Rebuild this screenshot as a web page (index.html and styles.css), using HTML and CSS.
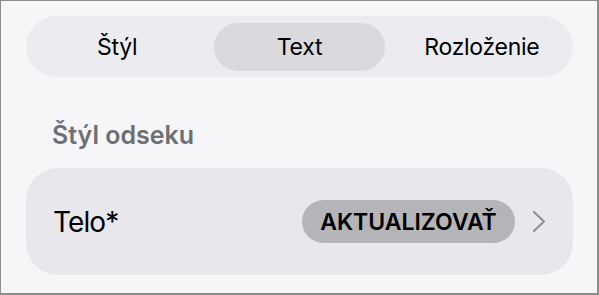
FILE: index.html
```html
<!DOCTYPE html>
<html>
<head>
  <link rel="stylesheet" href="styles.css">
</head>
<body>
  <div class="frame">
    <div class="segmented">
      <div class="segment">Štýl</div>
      <div class="segment selected">Text</div>
      <div class="segment">Rozloženie</div>
    </div>

    <div class="section-title">Štýl odseku</div>

    <div class="style-row">
      <div class="style-name">Telo*</div>
      <button class="update-button">AKTUALIZOVAŤ</button>
      <svg class="chevron" width="14" height="23" viewBox="0 0 14 23">
        <path d="M2 2 L12 11.5 L2 21" fill="none" stroke="#8e8e93" stroke-width="2" stroke-linecap="round" stroke-linejoin="round"/>
      </svg>
    </div>
  </div>
</body>
</html>
```

FILE: styles.css
```css
html, body {
  margin: 0;
  padding: 0;
}
body {
  font-family: Inter, "Liberation Sans", sans-serif;
  background: #f6f6f9;
  color: #000;
}
.frame {
  box-sizing: border-box;
  width: 599px;
  height: 295px;
  border: 1px solid #8c8c8c;
  border-right-width: 2px;
  border-bottom-width: 2px;
  padding: 15px 24px 0 25px;
}
.segmented {
  display: grid;
  grid-template-columns: 1fr 1fr 1fr;
  height: 61px;
  padding: 7px 0 6px;
  box-sizing: border-box;
  background: #ececf0;
  border-radius: 31px;
}
.segment {
  display: flex;
  align-items: center;
  justify-content: center;
  font-size: 23px;
  letter-spacing: -0.3px;
}
.segment.selected {
  margin: 0 6px;
  background: #dadade;
  border-radius: 24px;
}
.section-title {
  font-size: 25px;
  line-height: 30px;
  font-weight: 600;
  color: #6e6e73;
  padding: 43px 0 0 26px;
  height: 91px;
  box-sizing: border-box;
  letter-spacing: 0;
}
.style-row {
  display: flex;
  align-items: center;
  height: 107px;
  padding: 0 27px 0 27px;
  background: #e8e8ec;
  border-radius: 32px;
}
.style-name {
  flex: 1;
  font-size: 28px;
  letter-spacing: -0.9px;
}
.update-button {
  font-family: inherit;
  font-size: 23px;
  font-weight: 600;
  letter-spacing: 0;
  color: #000;
  background: #b5b5b9;
  border: none;
  border-radius: 22px;
  height: 43px;
  width: 213px;
  padding: 0;
  margin-right: 17px;
}
.chevron {
  display: block;
}
```
